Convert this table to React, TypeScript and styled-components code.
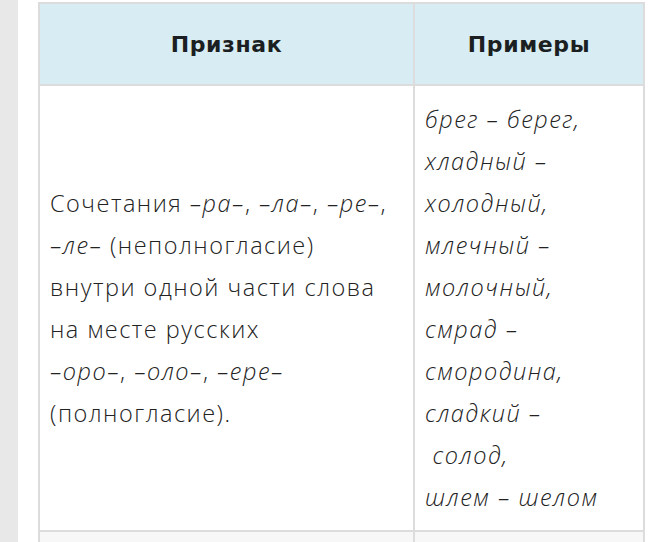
import React from 'react';
import styled, { createGlobalStyle } from 'styled-components';

const GlobalStyle = createGlobalStyle`
  html, body {
    margin: 0;
    padding: 0;
    background: #fff;
    font-family: "Open Sans", "Noto Sans", sans-serif;
    color: #222;
  }
`;

const Page = styled.div`
  display: flex;
  flex-direction: row;
  height: 542px;
  overflow: hidden;
`;

const SideStrip = styled.div`
  width: 18px;
  flex-shrink: 0;
  background: #e8e8e8;
`;

const Content = styled.div`
  padding: 2px 0 0 20px;
`;

const Table = styled.table`
  border-collapse: collapse;
  table-layout: fixed;
  width: 605px;
`;

const HeadCell = styled.th<{ $width: number }>`
  box-sizing: border-box;
  width: ${(p) => p.$width}px;
  height: 82px;
  background: #d8ecf4;
  border: 2px solid #dcdcdc;
  font-family: "DejaVu Sans", "Open Sans", sans-serif;
  font-weight: 700;
  font-size: 22px;
  letter-spacing: 0.6px;
  color: #1b1f22;
  text-align: center;
  padding: 0 10px;
`;

const Cell = styled.td<{ $muted?: boolean }>`
  border: 2px solid #dcdcdc;
  padding: 12px 10px;
  vertical-align: middle;
  background: ${(p) => (p.$muted ? '#f7f7f7' : '#fff')};
  font-size: 23.5px;
  font-weight: 300;
  letter-spacing: 1.5px;
  line-height: 42px;
  color: #222;
`;

const Lines = styled.div`
  display: flex;
  flex-direction: column;
  white-space: nowrap;
`;

const Em = styled.i`
  font-style: italic;
`;

const examples = [
  'брег – берег,',
  'хладный –',
  'холодный,',
  'млечный –',
  'молочный,',
  'смрад –',
  'смородина,',
  'сладкий –',
  '\u00a0солод,',
  'шлем – шелом',
];

export default function App() {
  return (
    <>
      <GlobalStyle />
      <Page>
        <SideStrip />
        <Content>
          <Table>
            <thead>
              <tr>
                <HeadCell $width={375}>Признак</HeadCell>
                <HeadCell $width={230}>Примеры</HeadCell>
              </tr>
            </thead>
            <tbody>
              <tr>
                <Cell>
                  <Lines>
                    <span>
                      Сочетания <Em>–ра–</Em>, <Em>–ла–</Em>, <Em>–ре–</Em>,
                    </span>
                    <span>
                      <Em>–ле–</Em> (неполногласие)
                    </span>
                    <span>внутри одной части слова</span>
                    <span>на месте русских</span>
                    <span>
                      <Em>–оро–</Em>, <Em>–оло–</Em>, <Em>–ере–</Em>
                    </span>
                    <span>(полногласие).</span>
                  </Lines>
                </Cell>
                <Cell>
                  <Lines>
                    {examples.map((line) => (
                      <Em key={line}>{line}</Em>
                    ))}
                  </Lines>
                </Cell>
              </tr>
              <tr>
                <Cell $muted>&nbsp;</Cell>
                <Cell $muted>&nbsp;</Cell>
              </tr>
            </tbody>
          </Table>
        </Content>
      </Page>
    </>
  );
}
